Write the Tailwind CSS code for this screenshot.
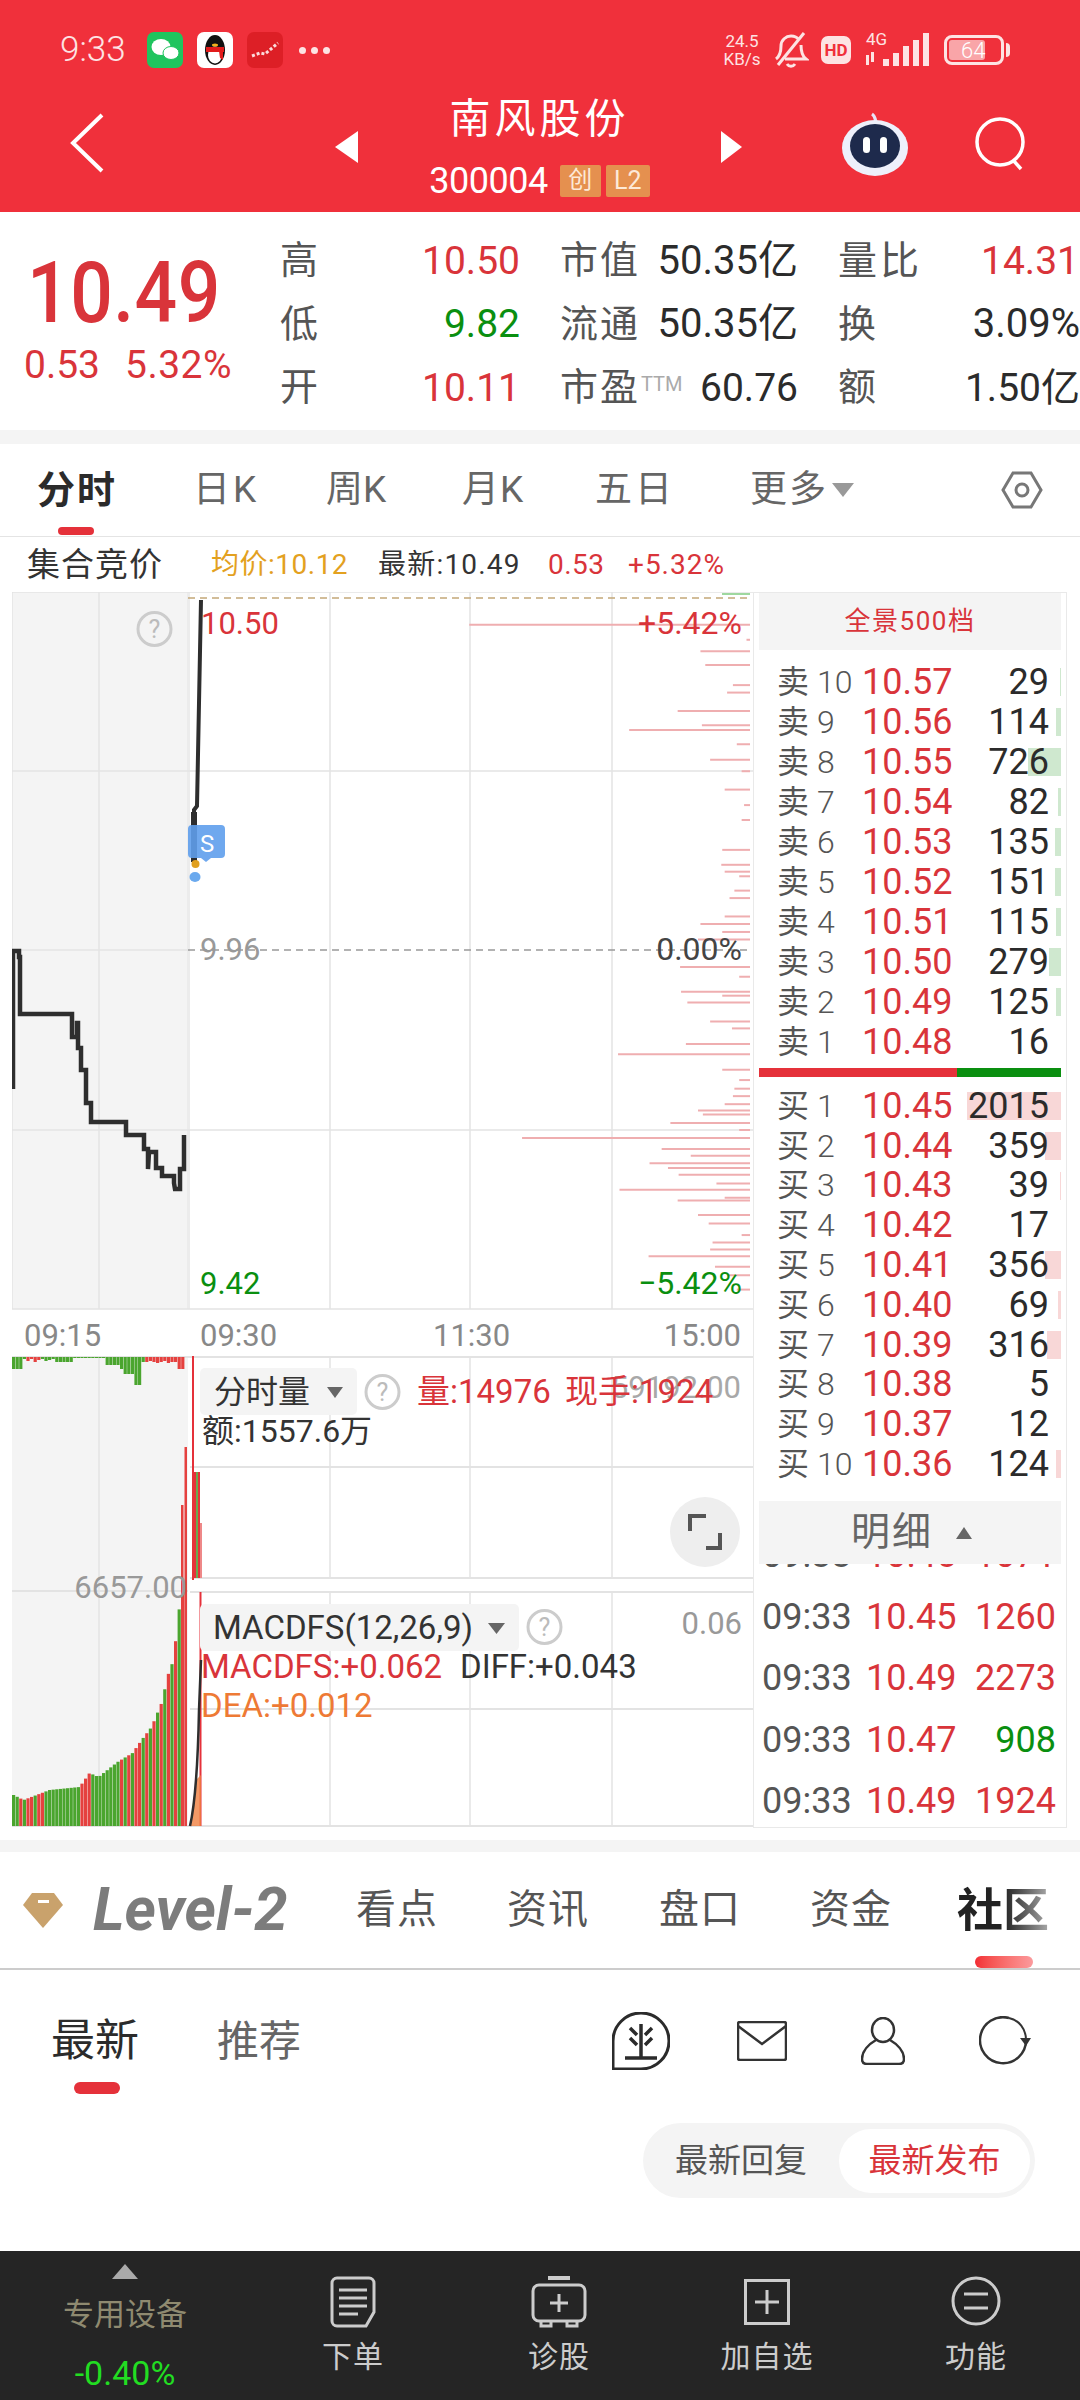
<!DOCTYPE html>
<html lang="en">
<head>
  <meta charset="UTF-8" />
  <title>南风股份</title>
  <script src="https://cdn.jsdelivr.net/npm/@tailwindcss/browser@4"></script>
</head>
<body class="w-[1080px] h-[2400px] overflow-hidden bg-white text-[#2b2b2b] font-['Roboto','Noto_Sans_CJK_SC',sans-serif]">

  <!-- red header -->
  <header class="h-[212px] bg-[#f0303b] text-white">
    <div class="h-[100px] flex items-center">
      <span class="ml-[60px] w-[87px] text-[35px] font-light text-[#fde3e3]">9:33</span>
      <svg class="w-[36px] h-[36px]" viewBox="0 0 36 36"><rect width="36" height="36" rx="7" fill="#1fc45e"/><ellipse cx="14" cy="15" rx="9.500" ry="8" fill="#fff"/><ellipse cx="24" cy="21" rx="8" ry="6.500" fill="#fff" stroke="#1fc45e"/></svg>
      <svg class="ml-[14px] w-[36px] h-[36px]" viewBox="0 0 36 36"><rect width="36" height="36" rx="7" fill="#fff"/><ellipse cx="18" cy="18" rx="10" ry="15" fill="#111"/><ellipse cx="18" cy="23" rx="7" ry="8.500" fill="#fff"/><rect x="9" y="15" width="18" height="5" fill="#e21b1b"/><path d="M22 19l4 0 0 9-3-2z" fill="#e21b1b"/><ellipse cx="18" cy="13" rx="3" ry="1.500" fill="#f2b01c"/></svg>
      <svg class="ml-[14px] w-[36px] h-[36px]" viewBox="0 0 36 36"><rect width="36" height="36" rx="7" fill="#dd1f26"/><path d="M5 24l8-3 5 1 6-5 7-6" stroke="#fbdcdc" stroke-width="3" fill="none" stroke-dasharray="3 2"/></svg>
      <span class="ml-[16px] flex gap-[5px]"><i class="block w-[7px] h-[7px] rounded-full bg-[#fde3e3]"></i><i class="block w-[7px] h-[7px] rounded-full bg-[#fde3e3]"></i><i class="block w-[7px] h-[7px] rounded-full bg-[#fde3e3]"></i></span>
      <div class="ml-[392px] w-[40px] text-[17px] leading-[18px] text-center text-[#fde3e3]"><div>24.5</div><div>KB/s</div></div>
      <svg class="ml-[11px] w-[36px] h-[38px]" viewBox="0 0 36 38" fill="none" stroke="#fde3e3" stroke-width="3"><path d="M3 28c4-3 5-7 5-13 0-6 5-10 10-10 3 0 6 1 8 4M28 14c0 6 1 11 5 14H12"/><path d="M31 2L5 34"/><path d="M14 33c2 3 6 3 8 0"/></svg>
      <span class="ml-[12px] w-[30px] h-[28px] rounded-[7px] bg-[#fde3e3] text-[#f0303b] text-[17px] font-bold leading-[28px] text-center">HD</span>
      <div class="ml-[15px] w-[64px] h-[34px] relative">
        <span class="absolute left-0 top-[-3px] text-[17px] leading-[18px] text-[#fde3e3]">4G</span>
        <svg class="absolute inset-0" width="64" height="34" viewBox="0 0 64 34" fill="#fde3e3"><rect x="0" y="22" width="3" height="10"/><rect x="5" y="19" width="3" height="10"/><rect x="17" y="26" width="6" height="7"/><rect x="27" y="20" width="6" height="13"/><rect x="37" y="13" width="6" height="20"/><rect x="47" y="7" width="6" height="26"/><rect x="57" y="0" width="6" height="33"/></svg>
      </div>
      <div class="ml-[14px] w-[60px] h-[30px] rounded-[8px] border-[3px] border-[#fde3e3] p-[2px] relative">
        <div class="w-[36px] h-[20px] rounded-[3px] bg-[#f9a5a8]"></div>
        <span class="absolute left-[14px] top-[-1px] text-[22px] leading-[28px] font-light text-[#fff]">64</span>
      </div>
      <i class="ml-[2px] block w-[4px] h-[14px] rounded-r bg-[#fde3e3]"></i>
    </div>
    <div class="h-[112px] pb-[24px] flex items-center">
      <svg class="ml-[69px] w-[36px] h-[60px] -mt-[2px]" viewBox="0 0 36 60" fill="none" stroke="#fff" stroke-width="4"><path d="M33 2L4 30l29 28"/></svg>
      <i class="ml-[230px] block w-0 h-0 border-y-[16px] border-y-transparent border-r-[23px] border-r-white mt-[6px]"></i>
      <div class="w-[363px] flex flex-col items-center mt-[5px]">
        <div class="text-[41px] leading-[50px] tracking-[4px]">南风股份</div>
        <div class="flex items-center h-[36px] mt-[19px]">
          <span class="text-[36px] leading-[36px] tracking-[-0.5px]">300004</span>
          <span class="ml-[12px] w-[41px] h-[32px] rounded-[2px] bg-[#e5904f] text-[24px] leading-[30px] text-center text-[#fde9d8]">创</span>
          <span class="ml-[5px] w-[44px] h-[32px] rounded-[2px] bg-[#e5904f] text-[25px] leading-[32px] text-center text-[#fde9d8]">L2</span>
        </div>
      </div>
      <i class="block w-0 h-0 border-y-[16px] border-y-transparent border-l-[21px] border-l-white mt-[6px]"></i>
      <svg class="ml-[100px] w-[66px] h-[66px] mt-[0px]" viewBox="0 0 66 66"><path d="M34 11c-1-4-1-6-4-8" stroke="#e8e4f8" stroke-width="3" fill="none"/><ellipse cx="33" cy="37" rx="33" ry="28" fill="#eef0fb"/><ellipse cx="33" cy="35" rx="25" ry="22" fill="#1e2a4c"/><rect x="21" y="26" width="7" height="16" rx="3.500" fill="#fff"/><rect x="38" y="26" width="7" height="16" rx="3.500" fill="#fff"/></svg>
      <svg class="ml-[66px] w-[56px] h-[56px]" viewBox="0 0 56 56" fill="none" stroke="#fff" stroke-width="3.500"><circle cx="26" cy="26" r="23"/><path d="M39 44l8 9"/></svg>
    </div>
  </header>

  <!-- quote block -->
  <section class="h-[218px] flex">
    <div class="w-[283px] pl-[27px] pt-[38px] text-[#d9343a]">
      <div class="text-[75px] leading-[84px] font-medium origin-left scale-y-[1.14] tracking-[0.5px]">10.49</div>
      <div class="mt-[8px] -ml-[3px] flex text-[39px] leading-[46px]"><span class="w-[101px]">0.53</span><span class="tracking-[0.5px]">5.32%</span></div>
    </div>
    <div class="grid grid-cols-[240px_238px_242px] gap-x-[40px] pt-[17px] content-start">
      <div class="h-[63.500px] flex items-center justify-between text-[39px]"><span class="text-[38px] text-[#555]">高</span><span class="text-[#d9343a]">10.50</span></div>
      <div class="h-[63.500px] flex items-center justify-between text-[40px]"><span class="text-[38px] tracking-[2px] text-[#555]">市值</span><span>50.35亿</span></div>
      <div class="h-[63.500px] flex items-center justify-between text-[39px] pr-[1px]"><span class="text-[#555] tracking-[3px]">量比</span><span class="text-[#d9343a]">14.31</span></div>
      <div class="h-[63.500px] flex items-center justify-between text-[39px]"><span class="text-[38px] text-[#555]">低</span><span class="text-[#0a8f10]">9.82</span></div>
      <div class="h-[63.500px] flex items-center justify-between text-[40px]"><span class="text-[38px] tracking-[2px] text-[#555]">流通</span><span>50.35亿</span></div>
      <div class="h-[63.500px] flex items-center justify-between text-[40px]"><span class="text-[38px] text-[#555]">换</span><span>3.09%</span></div>
      <div class="h-[63.500px] flex items-center justify-between text-[39px]"><span class="text-[38px] text-[#555]">开</span><span class="text-[#d9343a]">10.11</span></div>
      <div class="h-[63.500px] flex items-center justify-between text-[39px]"><span class="flex items-center text-[38px] tracking-[2px] text-[#555]">市盈<span class="text-[20px] text-[#aaa] tracking-normal ml-[1px] -mt-[8px]">TTM</span></span><span>60.76</span></div>
      <div class="h-[63.500px] flex items-center justify-between text-[39px]"><span class="text-[38px] text-[#555]">额</span><span>1.50亿</span></div>
    </div>
  </section>
  <div class="h-[14px] bg-[#f4f4f4]"></div>

  <!-- chart tabs -->
  <nav class="h-[93px] border-b border-[#e4e4e4] relative text-[37px] text-[#666]">
    <div class="h-[92px] flex items-center">
      <span class="ml-[37px] w-[156px] font-bold text-[#2b2b2b] text-[38px] tracking-[2px]">分时</span>
      <span class="w-[133px] tracking-[3px]">日K</span>
      <span class="w-[136px]">周K</span>
      <span class="w-[133px] tracking-[1px]">月K</span>
      <span class="w-[155px] tracking-[3px]">五日</span>
      <span class="tracking-[2px]">更多</span>
      <i class="ml-[4px] block w-0 h-0 border-x-[11px] border-x-transparent border-t-[14px] border-t-[#999]"></i>
      <svg class="ml-[147px] w-[42px] h-[42px]" viewBox="0 0 42 42" fill="none" stroke="#777" stroke-width="3"><path d="M12 4h18l10 17-10 17H12L2 21z"/><circle cx="21" cy="21" r="6"/></svg>
    </div>
    <i class="absolute left-[58px] bottom-[1px] block w-[36px] h-[8px] rounded-full bg-[#e5313a]"></i>
  </nav>

  <div class="h-[55px] flex items-center text-[28px] whitespace-nowrap">
    <span class="ml-[27px] w-[184px] text-[33px] tracking-[1px] text-[#333]">集合竞价</span>
    <span class="w-[167px] text-[#e3a11f] tracking-[0.5px]">均价:10.12</span>
    <span class="w-[170px] text-[#333] tracking-[1.2px]">最新:10.49</span>
    <span class="w-[80px] text-[#d9343a] tracking-[0.5px]">0.53</span>
    <span class="text-[#d9343a] tracking-[1px]">+5.32%</span>
  </div>

  <!-- charts + order book -->
  <div class="h-[1236px] flex pl-[12px]">
    <svg id="chart" class="w-[741px] h-[1236px] block" width="741" height="1236" viewBox="12 592 741 1236">
      <rect x="12" y="592" width="176" height="717" fill="#f4f4f4"/>
      <rect x="12" y="1356" width="176" height="470" fill="#f4f4f4"/>
      <rect x="187" y="592" width="3" height="717" fill="#ececec"/>
      <g stroke="#e3e3e3" stroke-width="1.500" fill="none">
        <path d="M12 592H753M12 771H753M12 950H188M12 1130H753M12 1309H753M12 592V1309"/>
        <path d="M99 592V1309M330 592V1309M470 592V1309M612 592V1309"/>
        <path d="M12 1357H753M190 1467H753M190 1578H753M12 1591H188M190 1592H753M190 1709H753M12 1826H753" stroke-width="2"/>
        <path d="M99 1356V1826M330 1356V1578M470 1356V1578M612 1356V1578M330 1592V1826M470 1592V1826M612 1592V1826"/>
      </g>
      <path d="M188 598H752" stroke="#c4a878" stroke-width="1.500" stroke-dasharray="7 5" fill="none"/>
      <path d="M188 950H752" stroke="#999" stroke-width="1.500" stroke-dasharray="7 5" fill="none"/>
      <rect x="722" y="593" width="28" height="2" fill="#9fd89f"/>
      <g id="depth" stroke="#efaeb0" stroke-width="2"></g>

      <path fill="none" stroke="#2e2e2e" stroke-width="4.500" d="M13 1089V951H19V957H20V1014H72V1037H77V1023H78V1048H81V1070H86V1103H91V1122H126V1135H144V1149H148V1169L149 1152H156V1168H162V1176H174V1183L175 1189H180V1169H184V1135"/>
      <path fill="none" stroke="#2e2e2e" stroke-width="4" d="M194 865V810L197 806L201 600"/>
      <path fill="none" stroke="#2e2e2e" stroke-width="6" d="M194 862V812"/>
      <path d="M192 825H221a4 4 0 0 1 4 4V854a4 4 0 0 1-4 4H211L206 862L201 858H192a4 4 0 0 1-4-4V829a4 4 0 0 1 4-4Z" fill="#5f9fec" fill-opacity=".9"/>
      <text x="200" y="852" font-size="24" fill="#fff">S</text>
      <circle cx="195.500" cy="864" r="4" fill="#e0a020"/>
      <ellipse cx="195" cy="877" rx="5.500" ry="5" fill="#6aa9ee"/>

      <circle cx="154.500" cy="629" r="16.500" fill="none" stroke="#ccc" stroke-width="3"/>
      <text x="154.500" y="638" font-size="25" text-anchor="middle" fill="#bbb">?</text>

      <g font-size="31">
        <text x="201" y="634" fill="#d9343a">10.50</text>
        <text x="742" y="634" fill="#d9343a" font-size="32" text-anchor="end">+5.42%</text>
        <text x="200" y="960" fill="#999">9.96</text>
        <text x="742" y="960" fill="#444" font-size="32" text-anchor="end">0.00%</text>
        <text x="200" y="1294" fill="#0a8f10">9.42</text>
        <text x="742" y="1294" fill="#0a8f10" font-size="32" text-anchor="end">−5.42%</text>
        <text x="24" y="1346" fill="#888">09:15</text>
        <text x="200" y="1346" fill="#888">09:30</text>
        <text x="433" y="1346" fill="#888">11:30</text>
        <text x="741" y="1346" fill="#888" text-anchor="end">15:00</text>
      </g>

      <g id="bars"></g>
      <path d="M193 1356V1580" stroke="#e5313a" stroke-width="2"/>
      <rect x="194" y="1472" width="2" height="106" fill="#e5313a"/><rect x="196" y="1472" width="2" height="106" fill="#6aa84f"/><rect x="198" y="1472" width="2" height="106" fill="#e5313a"/><rect x="200" y="1523" width="2" height="55" fill="#e88"/>
      <path d="M200.500 1592V1826" stroke="#e5313a" stroke-width="2"/>
      <path d="M190 1826L196 1780L201 1775V1826Z" fill="#f08040" opacity=".8"/>
      <path d="M190 1826C196 1800 198 1760 199 1710L201 1660" stroke="#2e2e2e" stroke-width="2.500" fill="none"/>

      <text x="187" y="1598" fill="#999" font-size="31">
        <tspan text-anchor="end">6657.00</tspan>
      </text>
      <text x="741" y="1398" fill="#a8a8a8" font-size="31" text-anchor="end">59192.00</text>

      <rect x="200" y="1368" width="157" height="47" rx="5" fill="#f4f4f4"/>
      <text x="214" y="1403" fill="#333" font-size="32">分时量</text>
      <path d="M327 1387H343L335 1398Z" fill="#666"/>
      <circle cx="382.500" cy="1392" r="16.500" fill="none" stroke="#ccc" stroke-width="3"/>
      <text x="382.500" y="1401" font-size="25" text-anchor="middle" fill="#bbb">?</text>
      <text x="417" y="1403" fill="#d9343a" font-size="33">量:14976</text>
      <text x="565" y="1403" fill="#d9343a" font-size="33">现手:1924</text>
      <text x="202" y="1442" fill="#333" font-size="32">额:1557.6万</text>

      <circle cx="705" cy="1532" r="35" fill="#eee"/>
      <path d="M706 1516H690V1531M720 1533V1548H706" stroke="#555" stroke-width="4" fill="none"/>

      <rect x="200" y="1604" width="319" height="47" rx="5" fill="#f4f4f4"/>
      <text x="213" y="1639" fill="#333" font-size="33">MACDFS(12,26,9)</text>
      <path d="M488 1623H505L496.500 1634Z" fill="#666"/>
      <circle cx="544.500" cy="1627" r="16.500" fill="none" stroke="#ccc" stroke-width="3"/>
      <text x="544.500" y="1636" font-size="25" text-anchor="middle" fill="#bbb">?</text>
      <text x="742" y="1634" fill="#999" font-size="31" text-anchor="end">0.06</text>
      <text x="201" y="1678" fill="#d9343a" font-size="33">MACDFS:+0.062</text>
      <text x="460" y="1678" fill="#333" font-size="33">DIFF:+0.043</text>
      <text x="201" y="1717" fill="#ee7a35" font-size="33">DEA:+0.012</text>
    </svg>

    <aside class="w-[314px] h-[1236px] border border-[#e9e9e9] px-[5px] flex flex-col">
      <div class="h-[57px] bg-[#f4f4f4] text-[26px] leading-[57px] text-center text-[#d9343a] tracking-[1.5px]">全景500档</div>
      <div id="asks" class="mt-[12px]"></div>
      <div class="mt-[6px] h-[9px] flex"><div class="w-[198px] bg-[#e5313a]"></div><div class="flex-1 bg-[#0a8f10]"></div></div>
      <div id="bids" class="mt-[9px]"></div>
      <div class="mt-[17px] h-[64px] flex items-center bg-[#f4f4f4] text-[#666]">
        <span class="ml-[92px] text-[39px] tracking-[2px]">明细</span>
        <i class="ml-[23px] block w-0 h-0 border-x-[8px] border-x-transparent border-b-[12px] border-b-[#666]"></i>
      </div>
      <div id="ticks" class="h-[265px] overflow-hidden flex flex-col justify-end gap-[9.500px]"></div>
    </aside>
  </div>

  <div class="h-[12px]"></div>
  <div class="h-[12px] bg-[#f4f4f4]"></div>

  <!-- level-2 tabs -->
  <nav class="h-[118px] border-b-2 border-[#ccc] relative flex items-center text-[40px] text-[#555]">
    <svg class="ml-[23px] w-[40px] h-[36px]" viewBox="0 0 40 36"><path d="M9 1H31L40 13L20 36L0 13Z" fill="#c9a26c"/><rect x="15" y="8" width="11" height="3" fill="#fff"/></svg>
    <span class="ml-[30px] w-[263px] text-[60px] italic font-bold text-[#7c7c7c]">Level-2</span>
    <span class="w-[151px] tracking-[1px]">看点</span>
    <span class="w-[152px] tracking-[1px]">资讯</span>
    <span class="w-[151px] tracking-[1px]">盘口</span>
    <span class="w-[147px] tracking-[1px]">资金</span>
    <span class="font-bold text-[46px] bg-linear-to-r from-[#222] from-50% to-[#aaa] bg-clip-text text-transparent">社区</span>
    <i class="absolute left-[975px] bottom-0 block w-[58px] h-[12px] rounded-full bg-linear-to-r from-[#f22c34] to-[#fb9a9d]"></i>
  </nav>

  <!-- community -->
  <section class="h-[281px] relative">
    <div class="h-[140px] flex items-center pt-[2px]">
      <span class="ml-[51px] w-[166px] text-[44px] text-[#2b2b2b]">最新</span>
      <span class="w-[395px] text-[42px] text-[#666]">推荐</span>
      <svg class="w-[58px] h-[58px]" viewBox="0 0 58 58" fill="none" stroke="#2b2b2b" stroke-width="3"><path d="M1 57V29a28 28 0 1 1 28 28Z"/><path d="M29 12V46M13 46H45M18 16l7 7M18 26l7 7M40 16l-7 7M40 26l-7 7" stroke-width="3.500"/></svg>
      <svg class="ml-[67px] w-[50px] h-[40px]" viewBox="0 0 50 40" fill="none" stroke="#333" stroke-width="2.500"><rect x="1" y="1" width="48" height="38" rx="2"/><path d="M1 5L25 23L49 5"/></svg>
      <svg class="ml-[74px] w-[44px] h-[48px]" viewBox="0 0 44 48" fill="none" stroke="#333" stroke-width="2.500"><ellipse cx="22" cy="13" rx="11" ry="12"/><path d="M15 23C8 27 1 34 1 42c0 4 2 5 5 5H38c3 0 5-1 5-5 0-8-7-15-14-19"/></svg>
      <svg class="ml-[74px] w-[52px] h-[50px]" viewBox="0 0 52 50" fill="none" stroke="#333" stroke-width="2.500"><path d="M30 2A23 23 0 1 0 47 24"/><path d="M30 2C40 4 47 13 47 24" stroke-width="2"/><path d="M41 22H52L47 30Z" fill="#333" stroke="none"/></svg>
    </div>
    <i class="absolute left-[74px] top-[112px] block w-[46px] h-[12px] rounded-full bg-[#e5313a]"></i>
    <div class="absolute left-[643px] top-[153px] w-[392px] h-[75px] rounded-full bg-[#f4f4f4] flex items-center text-[33px]">
      <span class="ml-[32px] w-[164px] text-[#555]">最新回复</span>
      <span class="w-[191px] h-[64px] rounded-full bg-white text-[#d9343a] leading-[64px] text-center">最新发布</span>
    </div>
  </section>

  <!-- bottom bar -->
  <footer class="h-[149px] bg-[#252525] flex text-[30px] text-[#ccc]">
    <div class="w-[250px] flex flex-col items-center pt-[13px]">
      <i class="block w-0 h-0 border-x-[13px] border-x-transparent border-b-[15px] border-b-[#aaa]"></i>
      <span class="mt-[14px] text-[31px] leading-[44px] text-[#8f8a70]">专用设备</span>
      <span class="mt-[18px] text-[34px] leading-[36px] text-[#22dd22]">-0.40%</span>
    </div>
    <div class="w-[206px] flex flex-col items-center pt-[25px]">
      <svg class="w-[46px] h-[52px]" viewBox="0 0 46 52" fill="none" stroke="#ccc" stroke-width="3"><path d="M7 2H39a5 5 0 0 1 5 5V36L36 50H7a5 5 0 0 1-5-5V7a5 5 0 0 1 5-5Z"/><path d="M9 14H37M9 22H37M9 30H37M9 38H28"/></svg>
      <span class="mt-[9px] leading-[40px] tracking-[1px]">下单</span>
    </div>
    <div class="w-[206px] flex flex-col items-center pt-[25px]">
      <svg class="w-[56px] h-[52px]" viewBox="0 0 56 52" fill="none" stroke="#ccc" stroke-width="3"><path d="M17 2H39" stroke-width="4"/><rect x="2" y="9" width="52" height="36" rx="6"/><path d="M28 18V36M19 27H37M10 46V50H20V46M36 46V50H46V46" stroke-width="3"/></svg>
      <span class="mt-[9px] leading-[40px] tracking-[1px]">诊股</span>
    </div>
    <div class="w-[210px] flex flex-col items-center pt-[28px]">
      <svg class="w-[46px] h-[46px]" viewBox="0 0 46 46" fill="none" stroke="#ccc" stroke-width="3"><rect x="1.500" y="1.500" width="43" height="43"/><path d="M23 11V35M11 23H35"/></svg>
      <span class="mt-[12px] leading-[40px] tracking-[1px]">加自选</span>
    </div>
    <div class="w-[208px] flex flex-col items-center pt-[25px]">
      <svg class="w-[50px] h-[50px]" viewBox="0 0 50 50" fill="none" stroke="#ccc" stroke-width="3"><circle cx="25" cy="25" r="23"/><path d="M13 18H37M13 32H37"/></svg>
      <span class="mt-[11px] leading-[40px] tracking-[1px]">功能</span>
    </div>
  </footer>

  <script>
    const NS = "http://www.w3.org/2000/svg";
    const add = (parent, tag, attrs) => {
      const el = document.createElementNS(NS, tag);
      Object.entries(attrs).forEach(([k, v]) => el.setAttribute(k, v));
      parent.appendChild(el);
    };

    // depth bars on the right of the price chart: [y, left x]
    const depth = [[322,968],[348,1540],[368,1445],[392,1455],[427,1512],[440,1500],[472,1398],[497,1448],[505,1298],[530,1520],[557,1465],[577,1530],[609,1495],[636,1535],[662,1530],[714,1490],[740,1488],[752,1495],[760,1525],[785,1515],[798,1505],[830,1495],[843,1445],[857,1490],[870,1440],[918,1403],[935,1525],[961,1405],[968,1490],[980,1418],[1013,1465],[1025,1510],[1052,1415],[1070,1275],[1097,1490],[1115,1525],[1130,1515],[1143,1512],[1157,1495],[1168,1440],[1175,1450],[1190,1383],[1202,1525],[1216,1077],[1235,1365],[1247,1425],[1260,1340],[1268,1378],[1280,1400],[1295,1478],[1306,1278],[1320,1495],[1325,1398],[1350,1440],[1365,1462],[1385,1530],[1398,1470],[1410,1465],[1422,1338],[1440,1475],[1455,1500],[1480,1520]];
    const depthLayer = document.getElementById("depth");
    depth.forEach(([y, x]) => {
      const py = y / 1.742 + 440;
      add(depthLayer, "line", { x1: x / 2.063, x2: 750, y1: py, y2: py });
    });

    // volume bars in the pre-open panel
    const RED = "#e5413f", GREEN = "#4aa52e";
    const tops = [[12,1795],[22,1800],[48,1790],[78,1787],[88,1773],[97,1777],[116,1762],[131,1753],[140,1740],[150,1727],[160,1703],[167,1673],[172,1660],[177,1613],[180,1595]];
    const pattern = "ggrgrrgrrggggggggggrrrggggggggrgrgrrgrgrgrgrgrg";
    const hanging = [12,12,12,2,4,2,5,3,2,4,3,2,5,5,5,5,5,1,1,1,1,1,1,1,1,1,8,8,8,8,12,17,17,17,28,28,5,5,4,5,6,5,4,6,5,5,12,12];
    const barLayer = document.getElementById("bars");
    const topAt = x => {
      for (let i = 1; i < tops.length; i++) {
        if (x <= tops[i][0]) {
          const [x0, y0] = tops[i - 1], [x1, y1] = tops[i];
          return y0 + (y1 - y0) * (x - x0) / (x1 - x0);
        }
      }
      return 1592;
    };
    for (let i = 0; i < 48; i++) {
      const x = 12 + i * 3.6;
      const y = topAt(x);
      const color = pattern[i] === "g" ? GREEN : RED;
      add(barLayer, "rect", { x, y, width: 3.2, height: 1826 - y, fill: color });
      add(barLayer, "rect", { x, y: 1357, width: 3.2, height: hanging[i], fill: i > 36 || (i > 3 && i < 8) ? RED : GREEN });
    }
    add(barLayer, "rect", { x: 181, y: 1505, width: 2.5, height: 321, fill: RED });
    add(barLayer, "rect", { x: 184.5, y: 1447, width: 2.5, height: 379, fill: RED });

    // order book
    const asks = [["卖","10","10.57","29",1],["卖","9","10.56","114",5],["卖","8","10.55","726",33],["卖","7","10.54","82",3],["卖","6","10.53","135",6],["卖","5","10.52","151",6],["卖","4","10.51","115",5],["卖","3","10.50","279",12],["卖","2","10.49","125",5],["卖","1","10.48","16",0]];
    const bids = [["买","1","10.45","2015",94],["买","2","10.44","359",16],["买","3","10.43","39",1],["买","4","10.42","17",0],["买","5","10.41","356",16],["买","6","10.40","69",3],["买","7","10.39","316",14],["买","8","10.38","5",0],["买","9","10.37","12",0],["买","10","10.36","124",5]];
    const renderBook = (id, rows, barClass, rowHeight) => {
      document.getElementById(id).innerHTML = rows.map(r => `
        <div class="relative flex items-center whitespace-nowrap" style="height:${rowHeight}px">
          <i class="absolute right-0 top-[6px] h-[28px] ${barClass}" style="width:${r[4]}px"></i>
          <span class="relative ml-[18px] w-[40px] text-[32px] text-[#555]">${r[0]}</span>
          <span class="relative w-[45px] text-[32px] font-light text-[#555]">${r[1]}</span>
          <span class="relative w-[100px] text-[36px] text-[#d9343a]">${r[2]}</span>
          <span class="relative w-[87px] text-[36px] text-right">${r[3]}</span>
        </div>`).join("");
    };
    renderBook("asks", asks, "bg-[#cfe8cf]", 40);
    renderBook("bids", bids, "bg-[#f8d7d7]", 39.8);

    // tick list
    const ticks = [["10.45","1071","text-[#d9343a]"],["10.45","1260","text-[#d9343a]"],["10.49","2273","text-[#d9343a]"],["10.47","908","text-[#0a8f10]"],["10.49","1924","text-[#d9343a]"]];
    document.getElementById("ticks").innerHTML = ticks.map(t => `
      <div class="h-[52px] shrink-0 flex items-center text-[36px] leading-[52px]">
        <span class="ml-[3px] w-[104px] text-[#555]">09:33</span>
        <span class="w-[90px] text-[#d9343a]">${t[0]}</span>
        <span class="w-[100px] text-right ${t[2]}">${t[1]}</span>
      </div>`).join("");
  </script>
</body>
</html>
